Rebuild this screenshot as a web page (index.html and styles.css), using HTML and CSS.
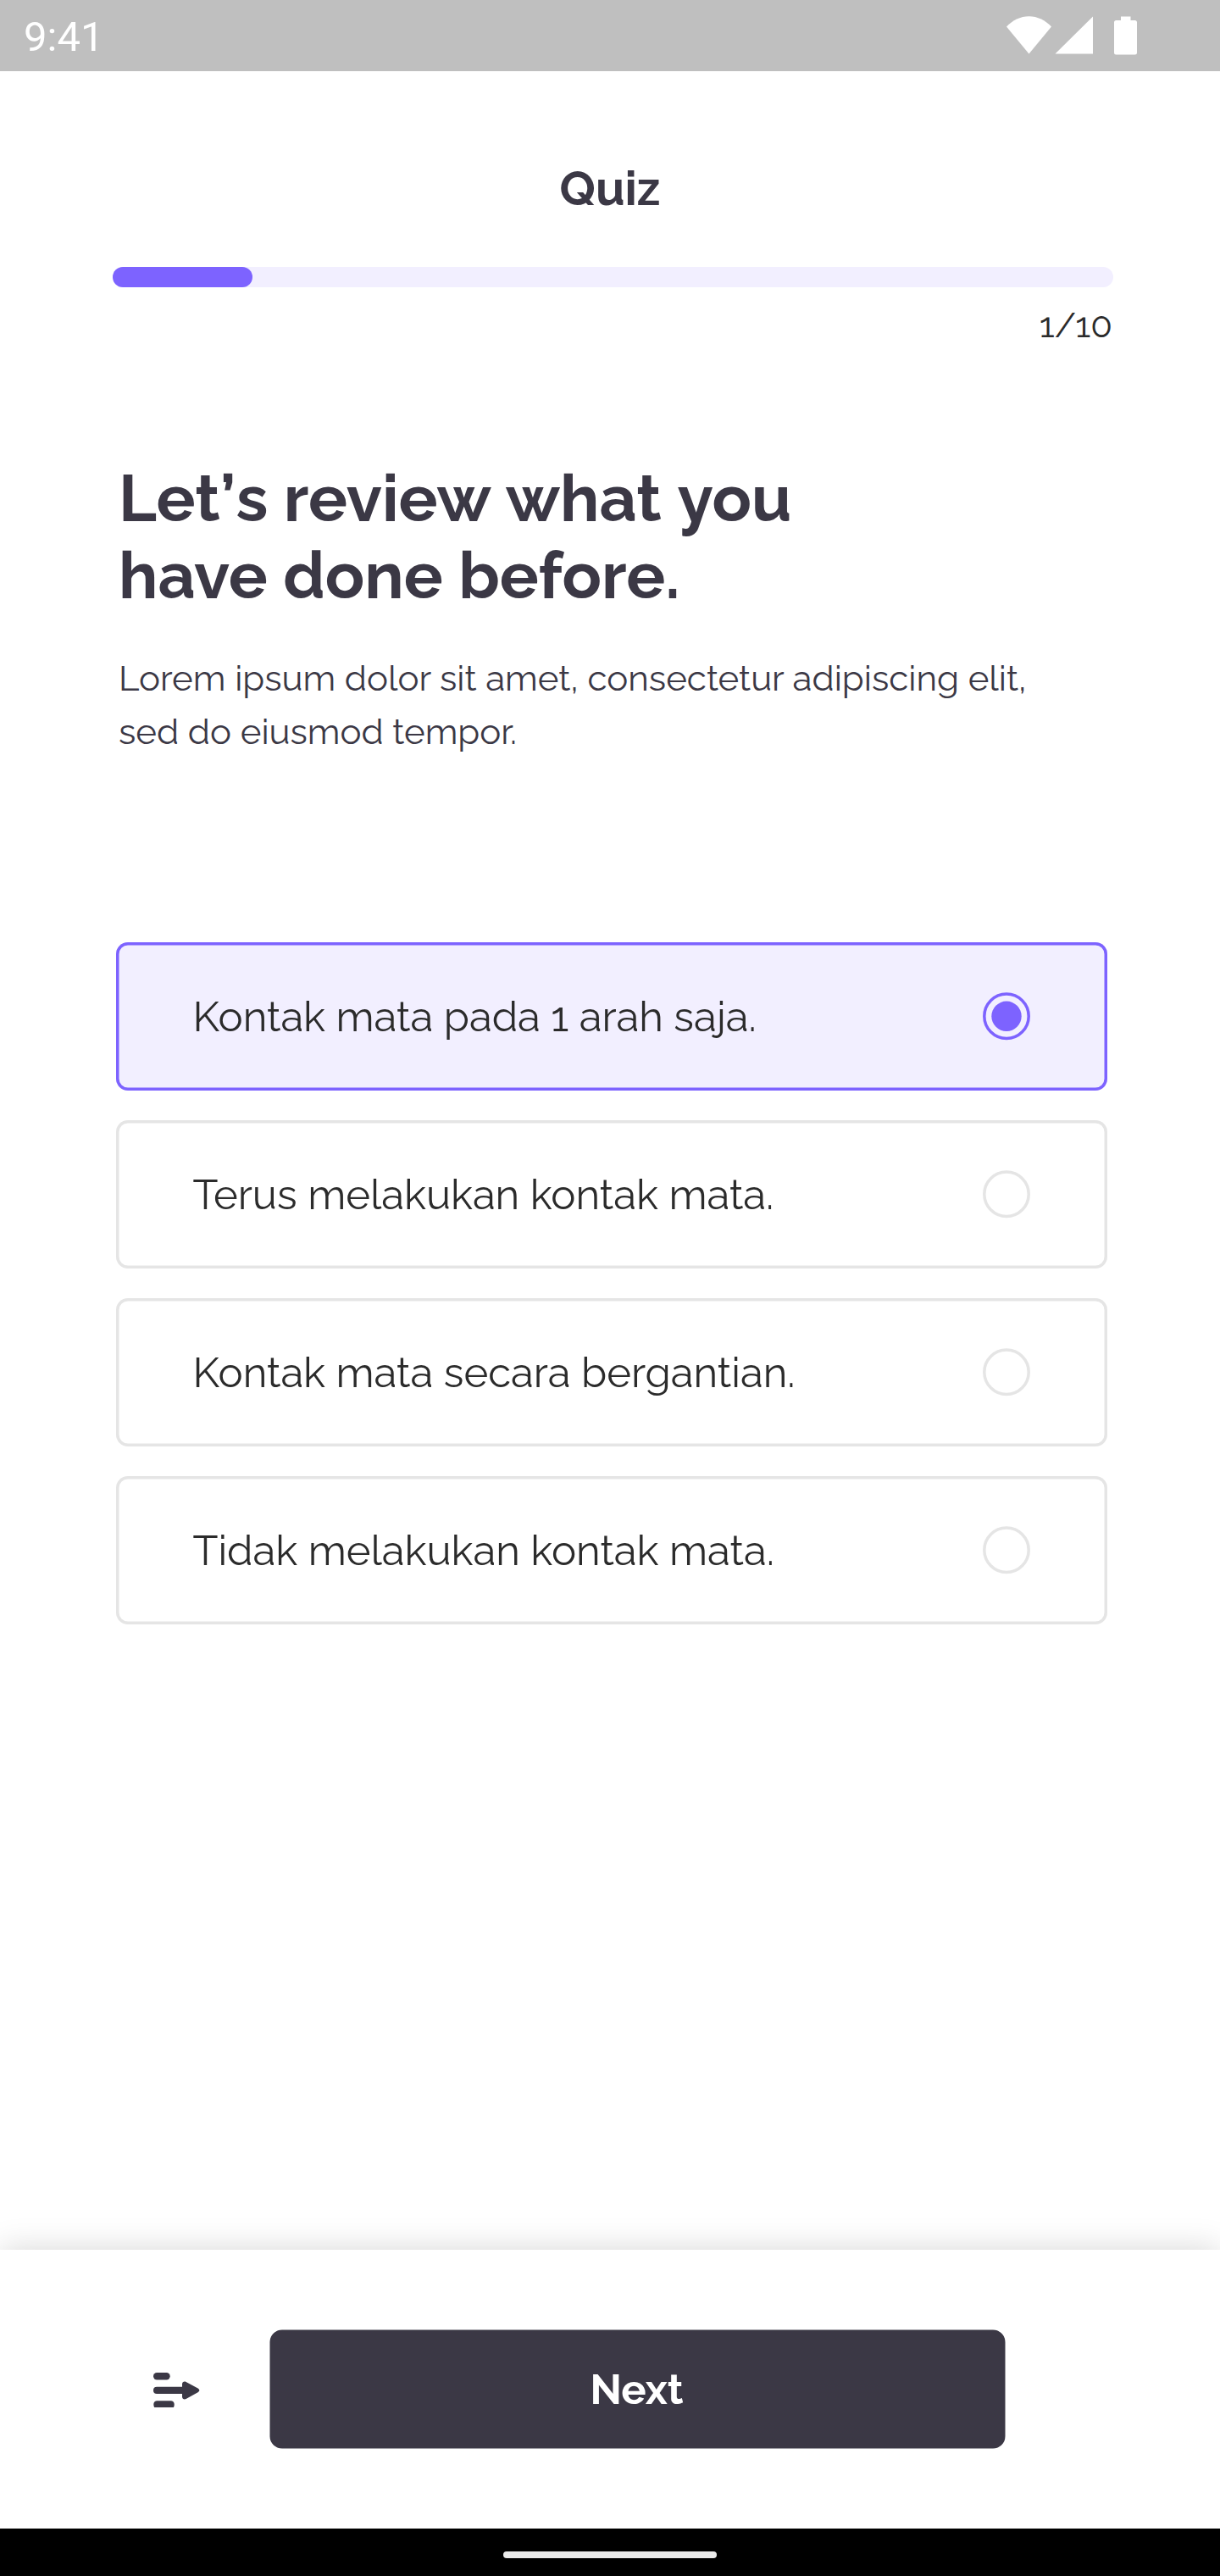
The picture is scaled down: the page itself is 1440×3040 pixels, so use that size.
FILE: index.html
```html
<!DOCTYPE html>
<html lang="id">
<head>
<meta charset="utf-8">
<title>Quiz</title>
<link rel="stylesheet" href="styles.css">
</head>
<body>
<div class="screen">
  <header class="status-bar">
    <span class="clock">9:41</span>
    <svg class="status-icons" width="156" height="48" viewBox="1187 18 156 48" fill="#fff" aria-hidden="true">
      <path d="M1214.5 63.5 1188 31.5C1195 24 1204.500 19.300 1214.500 19.300S1234 24 1241 31.500Z"/>
      <path d="M1290 19.500V63.500H1245.500Z"/>
      <path d="M1323 19.500H1334.500V24H1339.500A2.500 2.500 0 0 1 1342 26.500V62A2.500 2.500 0 0 1 1339.500 64.500H1317.500A2.500 2.500 0 0 1 1315 62V26.500A2.500 2.500 0 0 1 1317.500 24H1323Z"/>
    </svg>
  </header>

  <main class="content">
    <h1 class="page-title">Quiz</h1>
    <div class="progress"><div class="progress-fill"></div></div>
    <p class="counter">1/10</p>

    <section class="intro">
      <h2 class="question">Let<span class="apostrophe">’</span>s review <span class="word">what</span> <span class="word">you</span><br>have done before.</h2>
      <p class="description">Lorem ipsum dolor sit amet, consectetur adipiscing elit,<br>sed do eiusmod tempor.</p>
    </section>

    <div class="options">
      <div class="option selected">
        <span>Kontak mata pada 1 arah saja.</span>
        <svg class="radio" width="57" height="57" viewBox="0 0 57 57"><circle class="ring" cx="28" cy="28.300" r="26.200"/><circle class="dot" cx="28" cy="28.300" r="17.700"/></svg>
      </div>
      <div class="option">
        <span>Terus melakukan kontak mata.</span>
        <svg class="radio" width="57" height="57" viewBox="0 0 57 57"><circle class="ring" cx="28" cy="28.300" r="26.200"/></svg>
      </div>
      <div class="option">
        <span>Kontak mata secara bergantian.</span>
        <svg class="radio" width="57" height="57" viewBox="0 0 57 57"><circle class="ring" cx="28" cy="28.300" r="26.200"/></svg>
      </div>
      <div class="option">
        <span>Tidak melakukan kontak mata.</span>
        <svg class="radio" width="57" height="57" viewBox="0 0 57 57"><circle class="ring" cx="28" cy="28.300" r="26.200"/></svg>
      </div>
    </div>
  </main>

  <footer class="action-bar">
    <svg class="skip-icon" width="56" height="43" viewBox="180 2798 56 43" fill="#3b3845" aria-hidden="true">
      <rect x="181" y="2800" width="19.700" height="8.500" rx="4.200"/>
      <rect x="181" y="2816.700" width="40" height="8.300" rx="4.100"/>
      <path d="M215 2813.500C215 2811 217.500 2809.800 219.600 2810.900L233.600 2818.600C236 2820 236 2822 233.600 2823.300L219.600 2831C217.500 2832 215 2831 215 2828.500Z"/>
      <path d="M182.200 2841C180.300 2837.500 181.500 2833.200 185.200 2833.200H201.800C205.500 2833.200 206.700 2837.500 204.900 2841Z"/>
    </svg>
    <button class="next">Next</button>
  </footer>
  <div class="home-bar"><span class="home-pill"></span></div>
</div>
</body>
</html>
```
FILE: styles.css
```css
* { box-sizing: border-box; }
body { margin: 0; background: #fff; font-family: Raleway, Lato, sans-serif; }
h1, h2, p { margin: 0; }

.screen { width: 1440px; height: 3040px; display: flex; flex-direction: column; overflow: hidden; }

/* Status bar */
.status-bar { height: 84px; flex: none; background: #bfbfbf; display: flex; justify-content: space-between; align-items: center; padding: 0 97px 0 28px; }
.clock { font: 400 49px/84px Roboto, sans-serif; color: #fff; padding-top: 3px; }

/* Header and progress */
.content { flex: 1; display: flex; flex-direction: column; padding: 105px 126px 0 133px; }
.page-title { font-size: 56px; line-height: 66px; font-weight: 700; color: #3b3845; text-align: center; padding-right: 7px; }
.progress { height: 24px; margin-top: 60px; background: #f2efff; border-radius: 12px; }
.progress-fill { width: 165px; height: 24px; background: #7d63ff; border-radius: 12px; }
.counter { font-size: 42px; line-height: 60px; color: #2b2b2b; text-align: right; margin-top: 15px; padding-right: 1px; }

/* Question */
.intro { margin: 129px 0 0 7px; color: #3b3845; }
.question { font-size: 76.8px; line-height: 90.5px; font-weight: 700; white-space: nowrap; }
.apostrophe { margin: 0 .2px; }
.word { margin-left: .5px; }
.description { font-size: 42.04px; line-height: 63px; margin-top: 45px; white-space: nowrap; }

/* Answers */
.options { margin: 217px 7px 0 4px; display: flex; flex-direction: column; gap: 35px; }
.option { height: 175px; border-radius: 14px; box-shadow: inset 0 0 0 3.5px #e5e5e5; display: flex; align-items: center; justify-content: space-between; padding: 0 90px 0 90.5px; font-size: 49px; color: #2b2b2b; }
.radio .ring { fill: none; stroke: #e5e5e5; stroke-width: 3.5; }
.selected { background: #f2efff; box-shadow: inset 0 0 0 3.5px #7d63ff; }
.selected .ring { stroke: #7d63ff; }
.dot { fill: #7d63ff; }

/* Bottom actions */
.action-bar { height: 329px; flex: none; background: #fff; box-shadow: 0 0 36px rgba(0, 0, 0, .17); display: flex; align-items: center; gap: 83px; padding: 0 254px 0 180px; }
.skip-icon { flex: none; }
.next { flex: 1; height: 139px; border: 0; border-radius: 14px; background: #3b3845; box-shadow: 0 0 0 .5px #3b3845; color: #fff; font: 700 49px/58px Raleway, Lato, sans-serif; padding: 0 2px 0 0; }

.home-bar { height: 56px; flex: none; background: #000; display: flex; justify-content: center; align-items: center; }
.home-pill { width: 252px; height: 8px; margin-top: 6px; border-radius: 4px; background: #ebebeb; }
```
